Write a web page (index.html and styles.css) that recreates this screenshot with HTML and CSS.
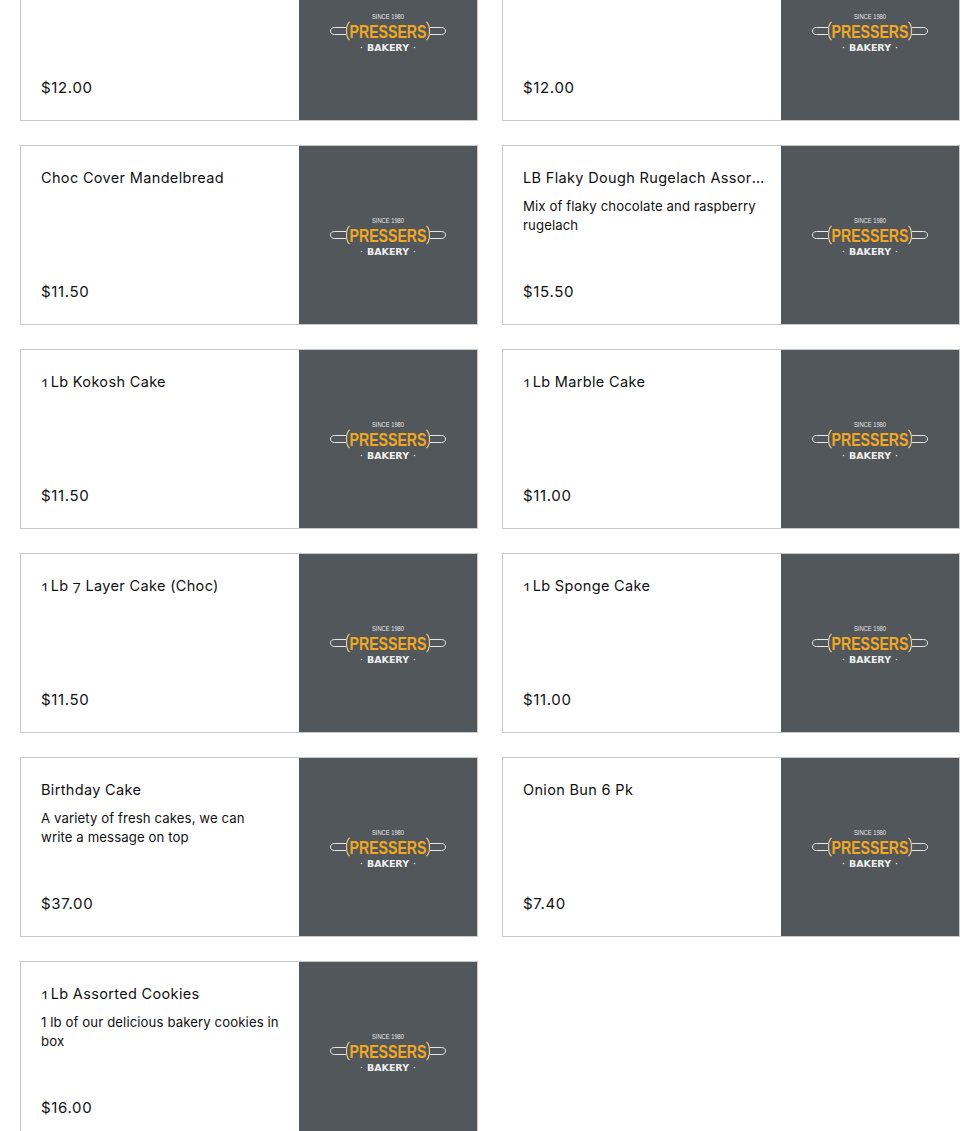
FILE: index.html
```html
<!DOCTYPE html>
<html lang="en">
<head>
<meta charset="utf-8">
<title>Pressers Bakery menu</title>
<link rel="stylesheet" href="styles.css">
</head>
<body>
<svg class="defs" width="0" height="0" aria-hidden="true">
  <symbol id="logo" viewBox="0 0 178 178">
    <rect width="178" height="178" fill="#52575c"/>
    <text x="89" y="76.500" class="l-since" textLength="32" lengthAdjust="spacingAndGlyphs">SINCE 1980</text>
    <path class="l-pin" d="M47 85.500H35.500C33 85.500 31.500 87 31.500 89C31.500 91 33 92.500 35.500 92.500H47"/>
    <path class="l-pin" d="M131 85.500H142.500C145 85.500 146.500 87 146.500 89C146.500 91 145 92.500 142.500 92.500H131"/>
    <path class="l-brace" d="M50.500 80C46.500 83 46.500 95 50.500 98"/>
    <path class="l-brace" d="M127.500 80C131.500 83 131.500 95 127.500 98"/>
    <text x="89" y="96" class="l-name" textLength="77" lengthAdjust="spacingAndGlyphs">PRESSERS</text>
    <circle class="l-dot" cx="62.500" cy="105.500" r="0.800"/>
    <text x="89" y="109" class="l-bakery" textLength="42" lengthAdjust="spacingAndGlyphs">BAKERY</text>
    <circle class="l-dot" cx="115.500" cy="105.500" r="0.800"/>
  </symbol>
</svg>
<main class="grid">
  <article class="card"><div class="info"><h2 class="name"></h2><p class="price">$12.00</p></div><svg class="thumb"><use href="#logo"/></svg></article>
  <article class="card"><div class="info"><h2 class="name"></h2><p class="price">$12.00</p></div><svg class="thumb"><use href="#logo"/></svg></article>
  <article class="card"><div class="info"><h2 class="name">Choc Cover Mandelbread</h2><p class="price">$11.50</p></div><svg class="thumb"><use href="#logo"/></svg></article>
  <article class="card"><div class="info"><h2 class="name">LB Flaky Dough Rugelach Assorted</h2><p class="desc">Mix of flaky chocolate and raspberry rugelach</p><p class="price">$15.50</p></div><svg class="thumb"><use href="#logo"/></svg></article>
  <article class="card"><div class="info"><h2 class="name"><span class="os">1</span> Lb Kokosh Cake</h2><p class="price">$11.50</p></div><svg class="thumb"><use href="#logo"/></svg></article>
  <article class="card"><div class="info"><h2 class="name"><span class="os">1</span> Lb Marble Cake</h2><p class="price">$11.00</p></div><svg class="thumb"><use href="#logo"/></svg></article>
  <article class="card"><div class="info"><h2 class="name"><span class="os">1</span> Lb <span class="os">7</span> Layer Cake (Choc)</h2><p class="price">$11.50</p></div><svg class="thumb"><use href="#logo"/></svg></article>
  <article class="card"><div class="info"><h2 class="name"><span class="os">1</span> Lb Sponge Cake</h2><p class="price">$11.00</p></div><svg class="thumb"><use href="#logo"/></svg></article>
  <article class="card"><div class="info"><h2 class="name">Birthday Cake</h2><p class="desc">A variety of fresh cakes, we can write a message on top</p><p class="price">$37.00</p></div><svg class="thumb"><use href="#logo"/></svg></article>
  <article class="card"><div class="info"><h2 class="name">Onion Bun 6 Pk</h2><p class="price">$7.40</p></div><svg class="thumb"><use href="#logo"/></svg></article>
  <article class="card"><div class="info"><h2 class="name"><span class="os">1</span> Lb Assorted Cookies</h2><p class="desc">1 lb of our delicious bakery cookies in box</p><p class="price">$16.00</p></div><svg class="thumb"><use href="#logo"/></svg></article>
</main>
</body>
</html>
```
FILE: styles.css
```css
* { box-sizing: border-box; }
html, body { margin: 0; height: 100%; overflow: hidden; background: #fff; }
body { font-family: "Inter", "Liberation Sans", sans-serif; color: #111; }
.defs { position: absolute; }
.grid {
  display: grid;
  grid-template-columns: 458px 458px;
  grid-auto-rows: 180px;
  gap: 24px;
  margin: -59px 0 0 20px;
}
.card { display: flex; border: 1px solid #c9c9c9; background: #fff; min-width: 0; }
.info { flex: 1; min-width: 0; padding: 20px 20px 20px; display: flex; flex-direction: column; }
.name {
  margin: 0 -5px 0 0;
  font-size: 14.500px;
  line-height: 24px;
  height: 24px;
  font-weight: 400;
  letter-spacing: 0.34px;
  white-space: nowrap;
  overflow: hidden;
  text-overflow: ellipsis;
}
.os { font-family: "Open Sans", sans-serif; font-variant-numeric: oldstyle-nums; margin-right: -3px; }
.os + .os { margin-right: 0; }
.desc { margin: 7px 0 0; font-size: 13.200px; line-height: 19px; letter-spacing: 0.1px; }
.price { margin: auto 0 0; font-size: 15px; line-height: 24px; letter-spacing: 0.65px; }
.thumb { width: 178px; height: 178px; flex: none; display: block; }
.l-since { font: 400 6.500px "Liberation Sans", sans-serif; fill: #e4e4e4; text-anchor: middle; }
.l-name { font: 700 19px "Liberation Sans", sans-serif; fill: #f0a823; text-anchor: middle; }
.l-bakery { font: 700 9.500px "DejaVu Sans", sans-serif; fill: #efefef; text-anchor: middle; }
.l-pin { fill: none; stroke: #e8e8e8; stroke-width: 1; }
.l-brace { fill: none; stroke: #e9c987; stroke-width: 1.200; }
.l-dot { fill: #e8e8e8; }
```
